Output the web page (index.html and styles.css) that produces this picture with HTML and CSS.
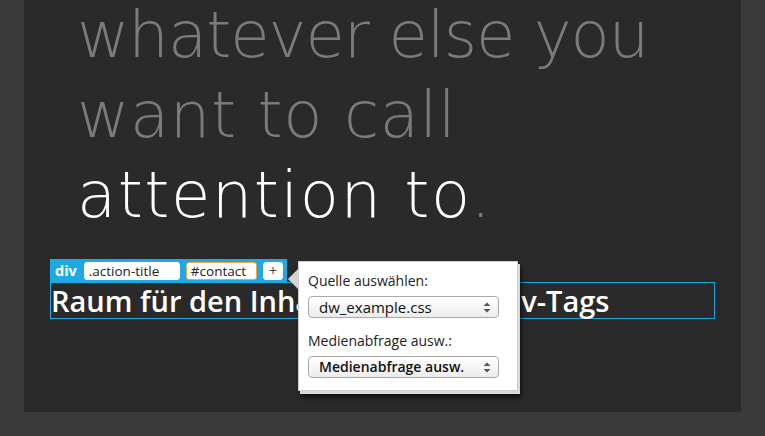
FILE: index.html
```html
<!DOCTYPE html>
<html>
<head>
<meta charset="utf-8">
<link rel="stylesheet" href="styles.css">
</head>
<body>
<div class="panel">
  <h1 class="headline">
    <span class="line line-1 dim">whatever else you</span>
    <span class="line line-2 dim">want to call</span>
    <span class="line line-3"><span class="bright">attention to</span><span class="dim">.</span></span>
  </h1>
  <div class="selection">
    <div class="tagbar">
      <span class="tagname">div</span>
      <span class="chip chip-class">.action-title</span>
      <span class="chip chip-id">#contact</span>
      <span class="chip chip-add">+</span>
    </div>
    <div class="element-box">
      <p class="element-text">Raum für den Inhalt des neuen Div-Tags</p>
    </div>
  </div>
  <div class="popup">
    <span class="popup-arrow"></span>
    <label class="popup-label">Quelle auswählen:</label>
    <div class="select">
      <span class="select-text">dw_example.css</span>
      <svg class="updown" width="8" height="11" viewBox="0 0 8 11"><path d="M4 0.5 L7.5 4 H0.5 Z M4 10.5 L7.5 7 H0.5 Z" fill="#555"/></svg>
    </div>
    <label class="popup-label second">Medienabfrage ausw.:</label>
    <div class="select">
      <span class="select-text strong">Medienabfrage ausw.</span>
      <svg class="updown" width="8" height="11" viewBox="0 0 8 11"><path d="M4 0.5 L7.5 4 H0.5 Z M4 10.5 L7.5 7 H0.5 Z" fill="#555"/></svg>
    </div>
  </div>
</div>
</body>
</html>
```
FILE: styles.css
```css
html, body {
  margin: 0;
  padding: 0;
}
body {
  background: #3a3a3a;
  width: 765px;
  height: 436px;
  overflow: hidden;
}
.panel {
  position: relative;
  margin-left: 24px;
  width: 717px;
  height: 412px;
  background: #2a2a2a;
}
.headline {
  margin: 0;
  padding-left: 53px;
  font-family: "DejaVu Sans", sans-serif;
  font-weight: 200;
  font-size: 64px;
  line-height: 70px;
  white-space: nowrap;
}
.line {
  display: block;
  height: 80px;
}
.line-1 { letter-spacing: -1px; }
.line-2 { letter-spacing: 0.6px; }
.line-3 { letter-spacing: 1.5px; }
.dim { color: #7b7b7b; }
.bright { color: #ffffff; }

.selection {
  margin: 19px 0 0 26px;
  width: 665px;
}
.tagbar {
  display: flex;
  align-items: center;
  gap: 6px;
  width: 237px;
  height: 24px;
  box-sizing: border-box;
  padding: 0 4px 0 5px;
  background: #1ea9e5;
  font-family: "Open Sans", sans-serif;
  font-size: 13.5px;
}
.tagname {
  color: #fff;
  font-weight: 700;
  font-size: 14.5px;
  width: 23px;
  line-height: 18px;
}
.chip {
  height: 18px;
  box-sizing: border-box;
  background: #fff;
  border-radius: 3px;
  color: #222;
  line-height: 16px;
  padding: 0 4px;
  border: 1px solid #fff;
}
.chip-class { width: 97px; }
.chip-id { width: 72px; border-color: #f5a33a; }
.chip-add { width: 20px; text-align: center; padding: 0; color: #444; font-size: 14px; }

.element-box {
  height: 37px;
  box-sizing: border-box;
  border: 1px solid #1ea9e5;
  margin-top: -1px;
}
.element-text {
  margin: 0;
  font-family: "Open Sans", sans-serif;
  font-weight: 600;
  font-size: 29px;
  line-height: 35px;
  color: #fff;
  white-space: nowrap;
}

.popup {
  position: absolute;
  left: 274px;
  top: 261px;
  width: 220px;
  height: 130px;
  box-sizing: border-box;
  padding: 10px 9px 0 9px;
  background: #fff;
  border: 1px solid #cfcfcf;
  box-shadow: 2px 3px 0 #d9d9d9, 3px 6px 5px rgba(0,0,0,0.75);
  font-family: "Open Sans", sans-serif;
  color: #222;
}
.popup-arrow {
  position: absolute;
  left: -11px;
  top: 6px;
  width: 0;
  height: 0;
  border-top: 11px solid transparent;
  border-bottom: 11px solid transparent;
  border-right: 11px solid #d4d4d4;
}
.popup-label {
  display: block;
  font-size: 14px;
  line-height: 18px;
}
.popup-label.second {
  margin-top: 14px;
}
.select {
  display: flex;
  align-items: center;
  justify-content: space-between;
  margin-top: 6px;
  width: 191px;
  height: 22px;
  box-sizing: border-box;
  padding: 0 7px 0 10px;
  border: 1px solid #a9a9a9;
  border-radius: 4px;
  background: linear-gradient(#ffffff, #ececec);
}
.select-text {
  font-size: 15px;
  line-height: 18px;
  color: #111;
}
.select-text.strong {
  font-size: 14px;
  font-weight: 600;
}
.updown { display: block; }
```
